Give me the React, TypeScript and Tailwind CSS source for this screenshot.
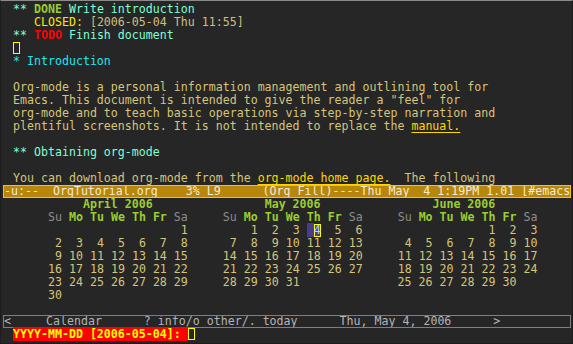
import React from "react";

type Piece = { col: number; text: string; cls?: string; cursor?: boolean };

const AQ = "text-[#7fffd4]";
const BODY = "text-[#d5c57a]";
const LINK = "text-[#ffd700] underline underline-offset-[2px]";
const GREEN = "text-[#9acd32] font-bold";
const GRAY = "text-[#8c8c8c]";
const CYAN = "text-[#22e4f0]";

function renderLine(pieces: Piece[]) {
  const sorted = [...pieces].sort((a, b) => a.col - b.col);
  const out: React.ReactNode[] = [];
  let cur = 0;
  sorted.forEach((p, i) => {
    if (p.col > cur) {
      out.push(<span key={"g" + i}>{" ".repeat(p.col - cur)}</span>);
      cur = p.col;
    }
    if (p.cursor) {
      out.push(
        <span
          key={"p" + i}
          className="inline-block h-[13px] w-[7px] align-top bg-[#483d8b] shadow-[inset_0_0_0_1px_#ffff00] text-[#b0d0ff]"
        >
          {p.text}
        </span>
      );
    } else {
      out.push(
        <span key={"p" + i} className={p.cls}>
          {p.text}
        </span>
      );
    }
    cur += p.text.length;
  });
  return out;
}

const months = [
  { name: "April 2006", first: 6, days: 30, sel: -1 },
  { name: "May 2006", first: 1, days: 31, sel: 4 },
  { name: "June 2006", first: 4, days: 30, sel: -1 },
];

function calendarLines(): Piece[][] {
  const lines: Piece[][] = [];
  // heading
  lines.push(
    months.map((m, i) => ({
      col: 5 + 25 * i + Math.floor((20 - m.name.length) / 2),
      text: m.name,
      cls: GREEN,
    }))
  );
  // weekday names
  const names = ["Su", "Mo", "Tu", "We", "Th", "Fr", "Sa"];
  const hdr: Piece[] = [];
  months.forEach((_, i) => {
    names.forEach((n, d) => {
      hdr.push({ col: 5 + 25 * i + d * 3, text: n, cls: d === 0 || d === 6 ? GRAY : GREEN });
    });
  });
  lines.push(hdr);
  for (let r = 0; r < 6; r++) {
    const row: Piece[] = [];
    months.forEach((m, i) => {
      for (let d = 0; d < 7; d++) {
        const day = r * 7 + d - m.first + 1;
        if (day < 1 || day > m.days) continue;
        const col = 5 + 25 * i + d * 3;
        if (day === m.sel) {
          row.push({ col, text: " ", cls: "bg-[#483d8b]" });
          row.push({ col: col + 1, text: String(day), cursor: true });
        } else {
          row.push({ col, text: String(day).padStart(2, " "), cls: BODY });
        }
      }
    });
    lines.push(row);
  }
  lines.push([]);
  return lines;
}

export default function App() {
  const cal = calendarLines();
  const L = "h-[13px] pl-[12px] whitespace-pre";
  return (
    <div className="w-[573px] h-[344px] overflow-hidden bg-[#262626] border-t border-t-[#8a8a8a] border-l border-r border-b border-l-[#1c1c1c] border-r-[#1c1c1c] border-b-[#1c1c1c] font-['DejaVu_Sans_Mono',monospace] text-[11.627px] leading-[13px]">
      <div className="pt-[2px] flex flex-col">
        <div className={L}>
          <span className={AQ}>** </span>
          <span className={GREEN}>DONE</span>
          <span className={AQ}> Write introduction</span>
        </div>
        <div className={L}>
          <span>   </span>
          <span className="text-[#ffe600]">CLOSED:</span>
          <span className="text-[#cdbf80]"> [2006-05-04 Thu 11:55]</span>
        </div>
        <div className={L}>
          <span className={AQ}>** </span>
          <span className="text-[#ff0000] font-bold">TODO</span>
          <span className={AQ}> Finish document</span>
        </div>
        <div className={L}>
          <span className="inline-block w-[7px] h-[12px] border border-[#ffff00] align-top"></span>
        </div>
        <div className={L}>
          <span className={CYAN}>* Introduction</span>
        </div>
        <div className={L}> </div>
        <div className={L + " " + BODY}>Org-mode is a personal information management and outlining tool for</div>
        <div className={L + " " + BODY}>Emacs. This document is intended to give the reader a "feel" for</div>
        <div className={L + " " + BODY}>org-mode and to teach basic operations via step-by-step narration and</div>
        <div className={L + " " + BODY}>
          <span>plentiful screenshots. It is not intended to replace the </span>
          <span className={LINK}>manual.</span>
        </div>
        <div className={L}> </div>
        <div className={L}>
          <span className={AQ}>** Obtaining org-mode</span>
        </div>
        <div className={L}> </div>
        <div className={L + " " + BODY}>
          <span>You can download org-mode from the </span>
          <span className={LINK}>org-mode home page.</span>
          <span>  The following</span>
        </div>
        {/* active mode line */}
        <div className="h-[13px] ml-[2px] w-[568px] border border-[#f2c21b] bg-[#b8860b] text-[#f6ecd2] leading-[11px] whitespace-pre overflow-hidden">
          {"-u:--  OrgTutorial.org    3% L9      (Org Fill)----Thu May  4 1:19PM 1.01 [#emacs"}
        </div>
        {/* calendar */}
        {cal.map((pcs, i) => (
          <div key={i} className={L}>
            {pcs.length ? renderLine(pcs) : " "}
          </div>
        ))}
        {/* inactive calendar mode line */}
        <div className="h-[13px] ml-[2px] w-[568px] border border-[#7f7f7f] text-[#b4b4b4] leading-[11px] whitespace-pre overflow-hidden">
          {renderLine([
            { col: 0, text: "<" },
            { col: 6, text: "Calendar" },
            { col: 20, text: "? info/o other/. today" },
            { col: 48, text: "Thu, May 4, 2006" },
            { col: 70, text: ">" },
          ])}
        </div>
        {/* minibuffer */}
        <div className={L}>
          <span className="bg-[#ff0000] text-[#ffff00] font-bold">{"YYYY-MM-DD [2006-05-04]: "}</span>
          <span className="inline-block w-[7px] h-[12px] border border-[#ffff00] align-top"></span>
        </div>
      </div>
    </div>
  );
}
